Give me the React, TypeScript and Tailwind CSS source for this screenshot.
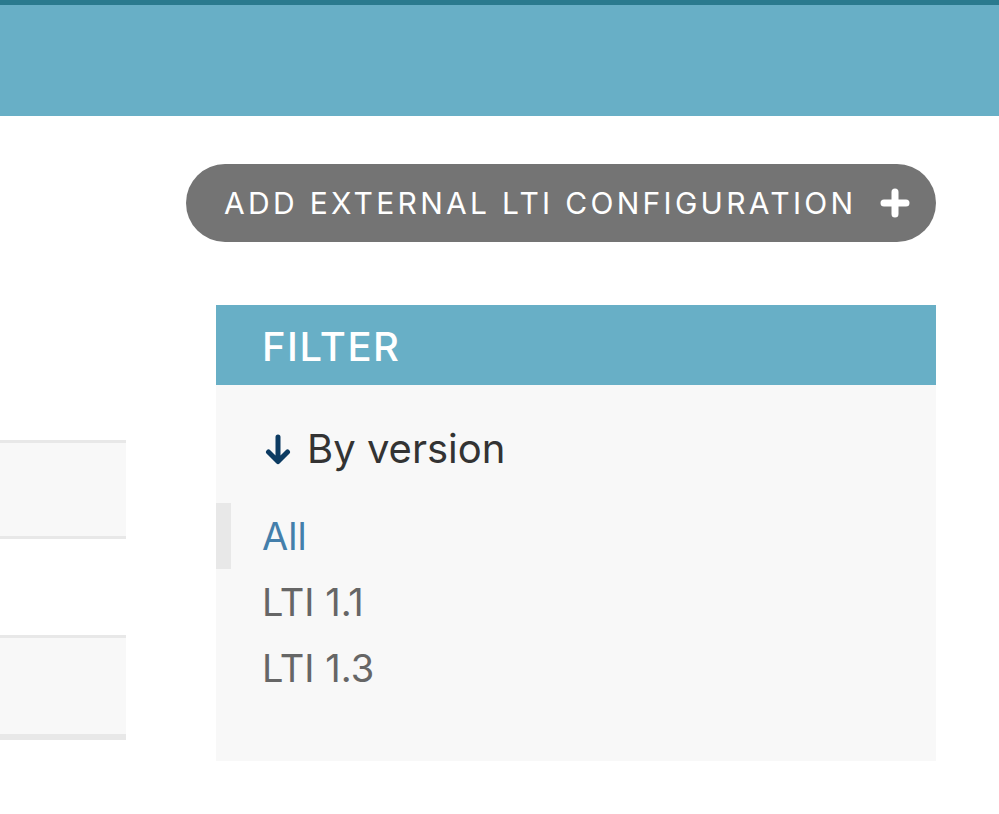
import React from 'react';

const rows = [
  { bg: 'bg-[#f8f8f8]', h: 'h-[96px]' },
  { bg: 'bg-white', h: 'h-[99px]' },
  { bg: 'bg-[#f8f8f8]', h: 'h-[99px]' },
];

const choices = [
  { label: 'All', selected: true },
  { label: 'LTI 1.1', selected: false },
  { label: 'LTI 1.3', selected: false },
];

export default function App() {
  return (
    <div className="min-h-[814px] bg-white font-['Inter','Liberation_Sans',sans-serif]">
      {/* header band */}
      <header className="h-[116px] border-t-[5px] border-[#2a7a8e] bg-[#68afc6]" />

      {/* object tools */}
      <div className="flex justify-end pr-[63px] pt-[48px]">
        <button className="flex h-[78px] w-[750px] items-center justify-between rounded-full bg-[#747474] pl-[38px] pr-[26px] text-[30px] leading-none tracking-[3.3px] text-white">
          <span>ADD EXTERNAL LTI CONFIGURATION</span>
          <svg width="30" height="30" viewBox="0 0 30 30">
            <path d="M15 4V26M4 15H26" stroke="white" strokeWidth="7" strokeLinecap="round" fill="none" />
          </svg>
        </button>
      </div>

      <div className="mt-[63px] flex gap-[90px]">
        {/* results table, cut off at the left */}
        <div className="mt-[135px] w-[126px] border-t-[3px] border-[#e8e8e8]">
          {rows.map((r, i) => (
            <div key={i} className={`border-b-[3px] border-[#e8e8e8] ${r.h} ${r.bg}`} />
          ))}
          <div className="h-[3px] bg-[#e8e8e8]" />
        </div>

        {/* filter sidebar */}
        <div className="w-[720px] bg-[#f8f8f8] pb-[60px]">
          <h2 className="flex h-[80px] items-center bg-[#68afc6] pl-[46px] pt-[3px] text-[40px] font-medium tracking-[1.5px] text-white">
            FILTER
          </h2>
          <div className="flex items-center gap-[16px] pl-[49px] pt-[40px] pb-[30px] leading-[48px]">
            <svg width="26" height="31" viewBox="0 0 26 31">
              <path d="M13 3V27M3.5 18L13 27.5L22.5 18" stroke="#0c3b62" strokeWidth="5" strokeLinecap="round" strokeLinejoin="round" fill="none" />
            </svg>
            <span className="text-[40px] text-[#333]">By version</span>
          </div>
          <ul>
            {choices.map((c) => (
              <li
                key={c.label}
                className={`flex h-[66px] items-center border-l-[15px] pl-[31px] text-[38px] ${
                  c.selected ? 'border-[#e8e8e8] text-[#447fab]' : 'border-transparent text-[#666]'
                }`}
              >
                {c.label}
              </li>
            ))}
          </ul>
        </div>
      </div>
    </div>
  );
}
